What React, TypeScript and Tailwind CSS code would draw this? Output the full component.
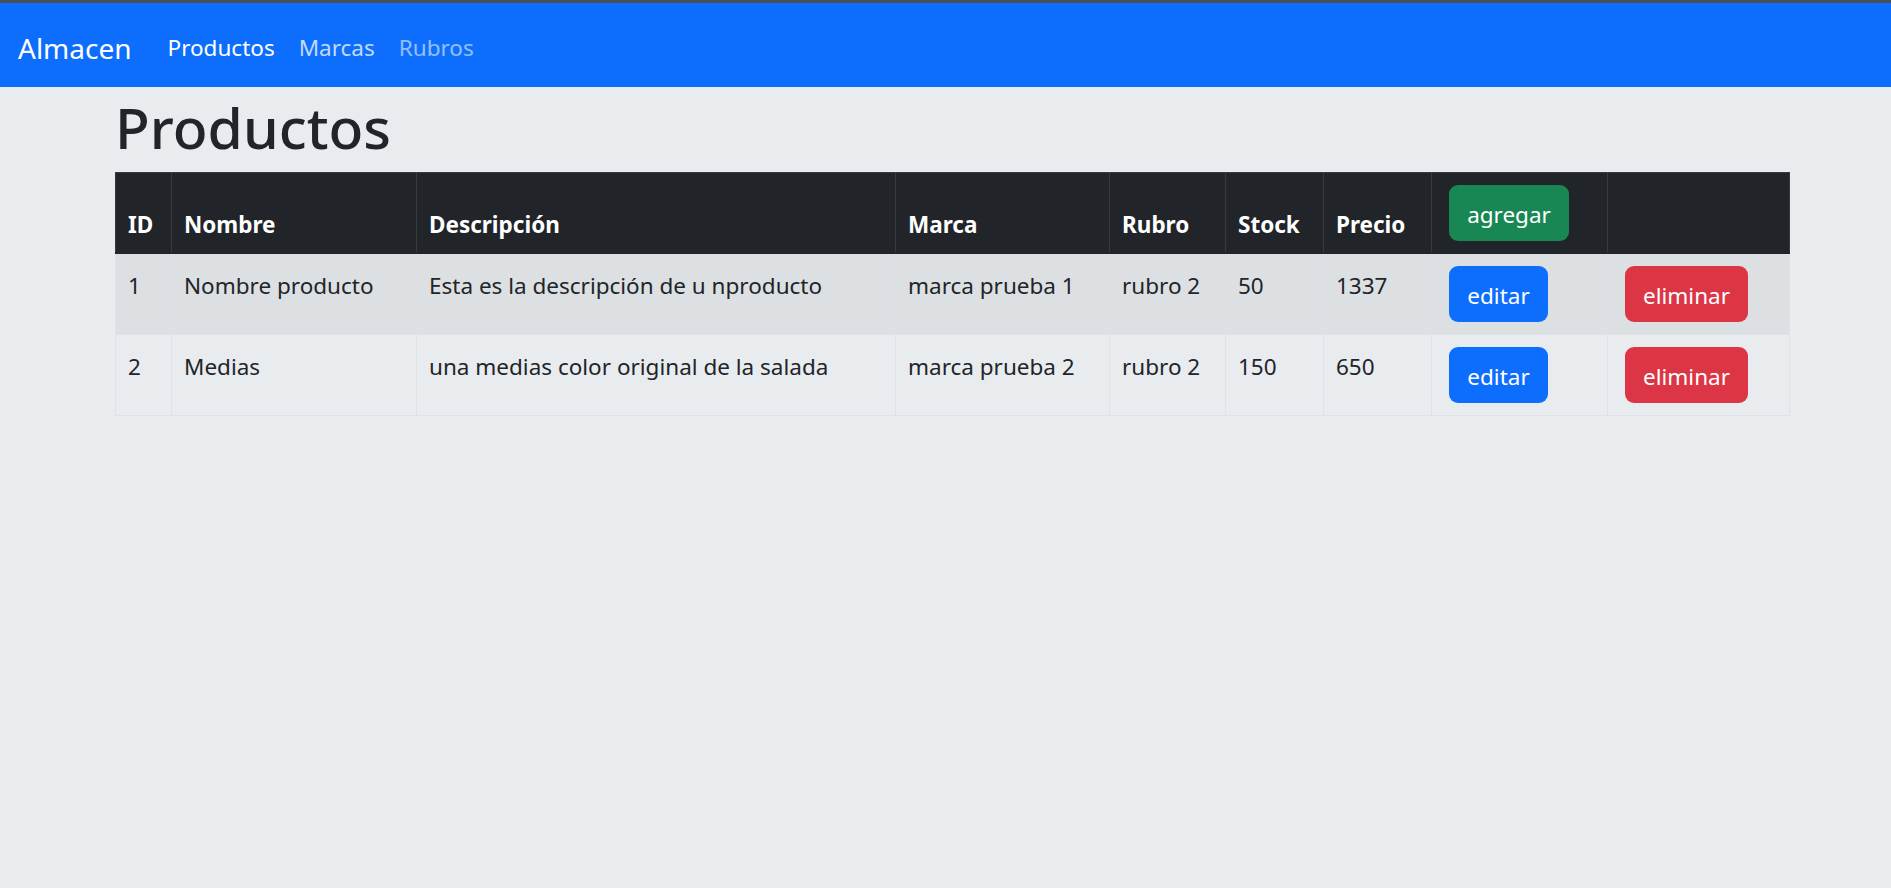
import React from "react";

type Row = {
  id: number;
  nombre: string;
  desc: string;
  marca: string;
  rubro: string;
  stock: number;
  precio: number;
};

const rows: Row[] = [
  { id: 1, nombre: "Nombre producto", desc: "Esta es la descripción de u nproducto", marca: "marca prueba 1", rubro: "rubro 2", stock: 50, precio: 1337 },
  { id: 2, nombre: "Medias", desc: "una medias color original de la salada", marca: "marca prueba 2", rubro: "rubro 2", stock: 150, precio: 650 },
];

const headers = ["ID", "Nombre", "Descripción", "Marca", "Rubro", "Stock", "Precio"];

export default function App() {
  return (
    <div className="min-h-screen bg-[#e9ecef] font-['Noto_Sans',sans-serif] text-[#212529]">
      <div className="h-[3px] bg-[#4a5057]" />
      <nav className="h-[84px] bg-[#0d6efd] flex items-center px-[18px] pt-[5px]">
        <span className="text-[28px] leading-[45px] text-white mr-[24px] pt-[2px]">Almacen</span>
        <a className="px-[12px] text-[22.5px] leading-[36px] text-white pt-[1px]">Productos</a>
        <a className="px-[12px] text-[22.5px] leading-[36px] text-white/75 pt-[1px]">Marcas</a>
        <a className="px-[12px] text-[22.5px] leading-[36px] text-white/55 pt-[1px]">Rubros</a>
      </nav>
      <main className="ml-[115px] w-[1674px]">
        <h1 className="text-[57px] leading-[72px] pt-[4px] mb-[9px] font-medium">Productos</h1>
        <table className="w-[1674px] table-fixed border-collapse text-[22.5px] leading-[36px]">
          <colgroup>
            <col className="w-[56px]" />
            <col className="w-[245px]" />
            <col className="w-[479px]" />
            <col className="w-[214px]" />
            <col className="w-[116px]" />
            <col className="w-[98px]" />
            <col className="w-[108px]" />
            <col className="w-[176px]" />
            <col className="w-[182px]" />
          </colgroup>
          <thead>
            <tr className="bg-[#212529] text-white">
              {headers.map((h) => (
                <th key={h} className="border border-[#373b3e] px-[12px] pt-[12px] pb-[9px] text-left align-bottom font-bold">
                  {h}
                </th>
              ))}
              <th className="border border-[#373b3e] px-[12px] pt-[12px] pb-[11px] text-left align-bottom">
                <button className="ml-[5px] h-[56px] w-[120px] pt-[3px] rounded-[9px] bg-[#198754] text-white font-normal text-[22.5px] leading-[36px]">
                  agregar
                </button>
              </th>
              <th className="border border-[#373b3e] px-[12px] pt-[12px] pb-[11px]" />
            </tr>
          </thead>
          <tbody>
            {rows.map((r, i) => (
              <tr key={r.id} className={i === 0 ? "bg-[#dde0e3] border-t-2 border-t-[#212529]" : ""}>
                <td className="border border-[#dee2e6] px-[12px] pt-[14px] pb-[12px] align-top">{r.id}</td>
                <td className="border border-[#dee2e6] px-[12px] pt-[14px] pb-[12px] align-top">{r.nombre}</td>
                <td className="border border-[#dee2e6] px-[12px] pt-[14px] pb-[12px] align-top">{r.desc}</td>
                <td className="border border-[#dee2e6] px-[12px] pt-[14px] pb-[12px] align-top">{r.marca}</td>
                <td className="border border-[#dee2e6] px-[12px] pt-[14px] pb-[12px] align-top">{r.rubro}</td>
                <td className="border border-[#dee2e6] px-[12px] pt-[14px] pb-[12px] align-top">{r.stock}</td>
                <td className="border border-[#dee2e6] px-[12px] pt-[14px] pb-[12px] align-top">{r.precio}</td>
                <td className="border border-[#dee2e6] px-[12px] pt-[12px] pb-[12px] align-top">
                  <button className="ml-[5px] h-[56px] w-[99px] pt-[3px] rounded-[9px] bg-[#0d6efd] text-white">editar</button>
                </td>
                <td className="border border-[#dee2e6] px-[12px] pt-[12px] pb-[12px] align-top">
                  <button className="ml-[5px] h-[56px] w-[123px] pt-[3px] rounded-[9px] bg-[#dc3545] text-white">eliminar</button>
                </td>
              </tr>
            ))}
          </tbody>
        </table>
      </main>
    </div>
  );
}
